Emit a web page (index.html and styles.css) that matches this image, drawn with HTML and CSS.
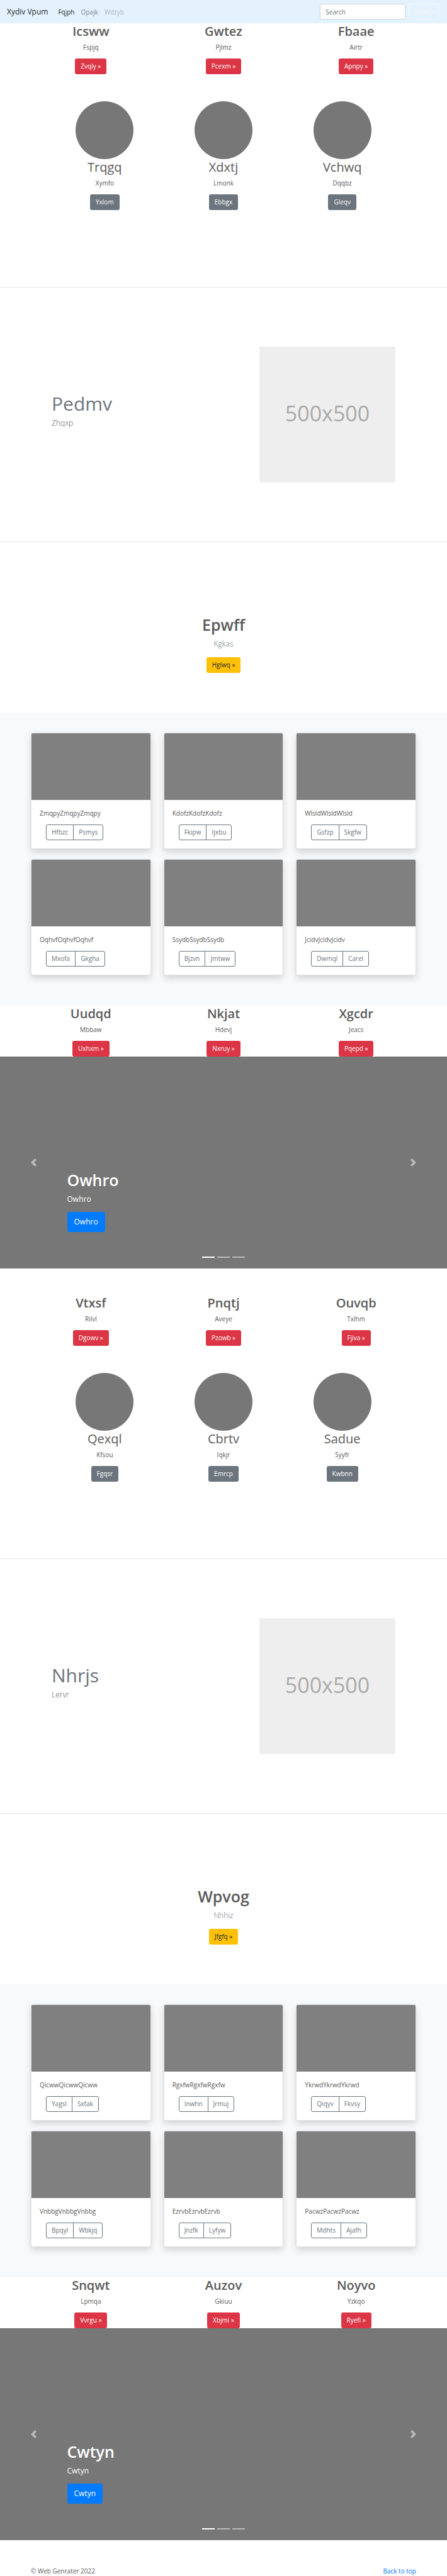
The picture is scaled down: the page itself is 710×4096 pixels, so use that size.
FILE: index.html
```html
<!DOCTYPE html>
<html lang="en">
<head>
<meta charset="utf-8">
<meta name="viewport" content="width=device-width, initial-scale=1">
<title>Xydiv Vpum</title>
<link rel="stylesheet" href="styles.css">
</head>
<body id="top">
<nav class="navbar">
  <a class="brand" href="#">Xydiv Vpum</a>
  <div class="nav-links">
    <a class="nav-link active" href="#">Fqjph</a>
    <a class="nav-link" href="#">Opajk</a>
    <a class="nav-link disabled" href="#">Wdzyb</a>
  </div>
  <form class="search">
    <input class="search-input" type="search" placeholder="Search" aria-label="Search">
    <button class="btn btn-outline-light" type="button">Search</button>
  </form>
</nav>
<main>
  <section class="container columns">
    <div class="column"><h2 class="strong">Icsww</h2><p>Fspjq</p><a class="btn btn-danger" href="#">Zvqly »</a></div>
    <div class="column"><h2 class="strong">Gwtez</h2><p>Pjlmz</p><a class="btn btn-danger" href="#">Pcexm »</a></div>
    <div class="column"><h2 class="strong">Fbaae</h2><p>Airtr</p><a class="btn btn-danger" href="#">Apnpy »</a></div>
  </section>

  <section class="circles">
    <div class="column"><div class="circle"></div><h2>Trqgq</h2><p>Xymfo</p><a class="btn btn-secondary" href="#">Yxlom</a></div>
    <div class="column"><div class="circle"></div><h2>Xdxtj</h2><p>Lmonk</p><a class="btn btn-secondary" href="#">Ebbgx</a></div>
    <div class="column"><div class="circle"></div><h2>Vchwq</h2><p>Dqqbz</p><a class="btn btn-secondary" href="#">Gleqv</a></div>
  </section>

  <section class="featurette">
    <div><h2 class="featurette-title">Pedmv</h2><p class="lead">Zhqxp</p></div>
    <div class="placeholder">500x500</div>
  </section>

  <section class="hero">
    <h1>Epwff</h1>
    <p class="lead muted">Kgkas</p>
    <a class="btn btn-warning" href="#">Hglwq »</a>
  </section>

  <section class="album">
    <div class="container cards">
      <article class="card"><div class="card-image"></div><div class="card-body"><p>ZmqpyZmqpyZmqpy</p><div class="btn-group"><button class="btn btn-outline" type="button">Hfbzc</button><button class="btn btn-outline" type="button">Psmys</button></div></div></article>
      <article class="card"><div class="card-image"></div><div class="card-body"><p>KdofzKdofzKdofz</p><div class="btn-group"><button class="btn btn-outline" type="button">Fkipw</button><button class="btn btn-outline" type="button">Ijxbu</button></div></div></article>
      <article class="card"><div class="card-image"></div><div class="card-body"><p>WlsldWlsldWlsld</p><div class="btn-group"><button class="btn btn-outline" type="button">Gsfzp</button><button class="btn btn-outline" type="button">Skgfw</button></div></div></article>
      <article class="card"><div class="card-image"></div><div class="card-body"><p>OqhvfOqhvfOqhvf</p><div class="btn-group"><button class="btn btn-outline" type="button">Mxofa</button><button class="btn btn-outline" type="button">Gkgha</button></div></div></article>
      <article class="card"><div class="card-image"></div><div class="card-body"><p>SsydbSsydbSsydb</p><div class="btn-group"><button class="btn btn-outline" type="button">Bjzvn</button><button class="btn btn-outline" type="button">Jmtww</button></div></div></article>
      <article class="card"><div class="card-image"></div><div class="card-body"><p>JcidvJcidvJcidv</p><div class="btn-group"><button class="btn btn-outline" type="button">Dwmql</button><button class="btn btn-outline" type="button">Carel</button></div></div></article>
    </div>
  </section>

  <section class="container columns">
    <div class="column"><h2 class="strong">Uudqd</h2><p>Mbbaw</p><a class="btn btn-danger" href="#">Uxhxm »</a></div>
    <div class="column"><h2 class="strong">Nkjat</h2><p>Hdevj</p><a class="btn btn-danger" href="#">Nxruy »</a></div>
    <div class="column"><h2 class="strong">Xgcdr</h2><p>Jeacs</p><a class="btn btn-danger" href="#">Pqepd »</a></div>
  </section>

  <section class="carousel">
    <button class="carousel-control prev" type="button" aria-label="Previous"><svg viewBox="0 0 8 8"><path d="M5.25 0l-4 4 4 4 1.5-1.5L4.25 4l2.5-2.5L5.25 0z"/></svg></button>
    <div class="caption"><h1>Owhro</h1><p>Owhro</p><a class="btn btn-primary" href="#">Owhro</a></div>
    <button class="carousel-control next" type="button" aria-label="Next"><svg viewBox="0 0 8 8"><path d="M2.75 0l-1.5 1.5L3.75 4l-2.5 2.5L2.75 8l4-4-4-4z"/></svg></button>
    <div class="indicators"><span class="current"></span><span></span><span></span></div>
  </section>

  <section class="container columns spaced">
    <div class="column"><h2 class="strong">Vtxsf</h2><p>Rilvl</p><a class="btn btn-danger" href="#">Dgowv »</a></div>
    <div class="column"><h2 class="strong">Pnqtj</h2><p>Aveye</p><a class="btn btn-danger" href="#">Pzowb »</a></div>
    <div class="column"><h2 class="strong">Ouvqb</h2><p>Txlhm</p><a class="btn btn-danger" href="#">Fjiva »</a></div>
  </section>

  <section class="circles">
    <div class="column"><div class="circle"></div><h2>Qexql</h2><p>Kfsou</p><a class="btn btn-secondary" href="#">Fgqsr</a></div>
    <div class="column"><div class="circle"></div><h2>Cbrtv</h2><p>Iqkjr</p><a class="btn btn-secondary" href="#">Emrcp</a></div>
    <div class="column"><div class="circle"></div><h2>Sadue</h2><p>Syyfr</p><a class="btn btn-secondary" href="#">Kwbnn</a></div>
  </section>

  <section class="featurette">
    <div><h2 class="featurette-title">Nhrjs</h2><p class="lead">Lervr</p></div>
    <div class="placeholder">500x500</div>
  </section>

  <section class="hero">
    <h1>Wpvog</h1>
    <p class="lead muted">Nhhiz</p>
    <a class="btn btn-warning" href="#">Jfgfq »</a>
  </section>

  <section class="album">
    <div class="container cards">
      <article class="card"><div class="card-image"></div><div class="card-body"><p>QicwwQicwwQicww</p><div class="btn-group"><button class="btn btn-outline" type="button">Yagsl</button><button class="btn btn-outline" type="button">Sxfak</button></div></div></article>
      <article class="card"><div class="card-image"></div><div class="card-body"><p>RgxfwRgxfwRgxfw</p><div class="btn-group"><button class="btn btn-outline" type="button">Inwhn</button><button class="btn btn-outline" type="button">Jrmuj</button></div></div></article>
      <article class="card"><div class="card-image"></div><div class="card-body"><p>YkrwdYkrwdYkrwd</p><div class="btn-group"><button class="btn btn-outline" type="button">Qiqyv</button><button class="btn btn-outline" type="button">Fkvsy</button></div></div></article>
      <article class="card"><div class="card-image"></div><div class="card-body"><p>VnbbgVnbbgVnbbg</p><div class="btn-group"><button class="btn btn-outline" type="button">Bpqyl</button><button class="btn btn-outline" type="button">Wbkjq</button></div></div></article>
      <article class="card"><div class="card-image"></div><div class="card-body"><p>EzrvbEzrvbEzrvb</p><div class="btn-group"><button class="btn btn-outline" type="button">Jnzfk</button><button class="btn btn-outline" type="button">Lyfyw</button></div></div></article>
      <article class="card"><div class="card-image"></div><div class="card-body"><p>PacwzPacwzPacwz</p><div class="btn-group"><button class="btn btn-outline" type="button">Mdhts</button><button class="btn btn-outline" type="button">Ajafh</button></div></div></article>
    </div>
  </section>

  <section class="container columns">
    <div class="column"><h2 class="strong">Snqwt</h2><p>Lpmqa</p><a class="btn btn-danger" href="#">Vvrgu »</a></div>
    <div class="column"><h2 class="strong">Auzov</h2><p>Gkiuu</p><a class="btn btn-danger" href="#">Xbjmi »</a></div>
    <div class="column"><h2 class="strong">Noyvo</h2><p>Yzkqo</p><a class="btn btn-danger" href="#">Ryefi »</a></div>
  </section>

  <section class="carousel">
    <button class="carousel-control prev" type="button" aria-label="Previous"><svg viewBox="0 0 8 8"><path d="M5.25 0l-4 4 4 4 1.5-1.5L4.25 4l2.5-2.5L5.25 0z"/></svg></button>
    <div class="caption"><h1>Cwtyn</h1><p>Cwtyn</p><a class="btn btn-primary" href="#">Cwtyn</a></div>
    <button class="carousel-control next" type="button" aria-label="Next"><svg viewBox="0 0 8 8"><path d="M2.75 0l-1.5 1.5L3.75 4l-2.5 2.5L2.75 8l4-4-4-4z"/></svg></button>
    <div class="indicators"><span class="current"></span><span></span><span></span></div>
  </section>
</main>
<footer class="container footer">
  <span>© Web Genrater 2022</span>
  <a href="#top">Back to top</a>
</footer>
</body>
</html>
```
FILE: styles.css
```css
*, *::before, *::after { box-sizing: border-box; }

body {
  margin: 0;
  background: #fff;
  color: #5a5a5a;
  font-family: "Open Sans", "Noto Sans", sans-serif;
  font-size: 10px;
  line-height: 16px;
}

h1, h2, p { margin: 0; }
h1 { font-size: 25px; line-height: 31px; font-weight: 600; margin-bottom: 5px; }
h2 { font-size: 20px; line-height: 25px; font-weight: 400; margin-bottom: 5px; }
h2.strong { font-weight: 600; }
p { margin-bottom: 10px; }
a { color: #007bff; text-decoration: none; }

.container { padding-left: 49px; padding-right: 49px; }

/* Buttons */
.btn {
  display: inline-block;
  padding: 4px 8px;
  border: 1px solid transparent;
  border-radius: 3px;
  background: none;
  color: #fff;
  font: inherit;
  line-height: 15px;
  text-align: center;
}
.btn-danger { background: #dc3545; }
.btn-secondary { background: #6c757d; }
.btn-warning { background: #ffc107; color: #212529; }
.btn-outline { border-color: #6c757d; color: #6c757d; }
.btn-outline-light { border-color: #f8f9fa; color: #f8f9fa; }
.btn-primary {
  padding: 5px 10px;
  border-radius: 4px;
  background: #007bff;
  font-size: 12px;
  line-height: 20px;
}

/* Navbar */
.navbar {
  display: flex;
  align-items: center;
  padding: 6px 11px;
  background: #e3f2fd;
}
.brand { color: rgba(0, 0, 0, .9); font-size: 12px; margin-right: 11px; }
.nav-links { display: flex; flex: 1; }
.nav-link { padding: 0 5px; color: rgba(0, 0, 0, .5); }
.nav-link.active { color: rgba(0, 0, 0, .9); }
.nav-link.disabled { color: rgba(0, 0, 0, .3); }
.search { display: flex; gap: 5px; }
.search-input {
  width: 136px;
  height: 25px;
  padding: 4px 8px;
  border: 1px solid #ced4da;
  border-radius: 3px;
  background: #fff;
  font: inherit;
  line-height: 15px;
}
.search-input::placeholder { color: #6c757d; opacity: 1; }

/* Three-column rows */
.columns { display: grid; grid-template-columns: repeat(3, 1fr); gap: 20px; }
.spaced { padding-top: 42px; }
.column { display: flex; flex-direction: column; align-items: center; }
.circles {
  display: grid;
  grid-template-columns: repeat(3, 1fr);
  padding: 43px 72px 122px;
}
.circle { width: 92px; height: 92px; border-radius: 50%; background: #777; }

/* Featurette */
.featurette {
  display: flex;
  align-items: center;
  justify-content: space-between;
  padding: 94px 82px;
  border-top: 1px solid #e5e5e5;
  border-bottom: 1px solid #e5e5e5;
}
.featurette-title { color: #6c757d; font-size: 30px; line-height: 38px; margin-bottom: 2px; }
.lead { font-size: 12px; line-height: 20px; font-weight: 300; margin-bottom: 12px; }
.placeholder {
  display: grid;
  place-items: center;
  width: 216px;
  aspect-ratio: 1;
  padding-bottom: 4px;
  background: #eee;
  color: #aaa;
  font-size: 34px;
}

/* Hero */
.hero { padding: 116px 0 63px; text-align: center; }
.hero .btn { display: block; width: max-content; margin: 0 auto; }
.hero .lead { margin-bottom: 11px; }
.muted { color: #6c757d; }

/* Album */
.album { padding: 32px 0 48px; background: #f8f9fb; }
.cards { display: grid; grid-template-columns: repeat(3, 1fr); gap: 16px 20px; }
.card {
  border: 1px solid rgba(0, 0, 0, .125);
  border-radius: 3px;
  background: #fff;
  box-shadow: 0 5px 11px rgba(0, 0, 0, .15);
}
.card-image { height: 106px; border-radius: 2px 2px 0 0; background: #808080; }
.card-body { padding: 13px; }
.btn-group { display: flex; margin-left: 10px; }
.btn-group .btn:first-child { border-radius: 3px 0 0 3px; }
.btn-group .btn:last-child { border-radius: 0 3px 3px 0; margin-left: -1px; }

/* Carousel */
.carousel {
  position: relative;
  display: grid;
  grid-template-columns: 15% 1fr 15%;
  min-height: 337px;
  background: #777;
  color: #fff;
}
.carousel-control {
  display: grid;
  place-items: center;
  padding: 0;
  border: 0;
  background: none;
  opacity: .5;
}
.carousel-control svg { width: 13px; height: 13px; fill: #fff; }
.caption { align-self: end; padding-bottom: 58px; }
.caption p { font-size: 12px; line-height: 20px; }
.caption .btn { display: block; width: max-content; }
.indicators {
  position: absolute;
  left: 0;
  right: 0;
  bottom: 17px;
  display: flex;
  justify-content: center;
  gap: 4px;
}
.indicators span { width: 20px; height: 2px; background: #fff; opacity: .5; }
.indicators .current { opacity: 1; }

.footer { display: flex; justify-content: space-between; padding-top: 41px; }
```
